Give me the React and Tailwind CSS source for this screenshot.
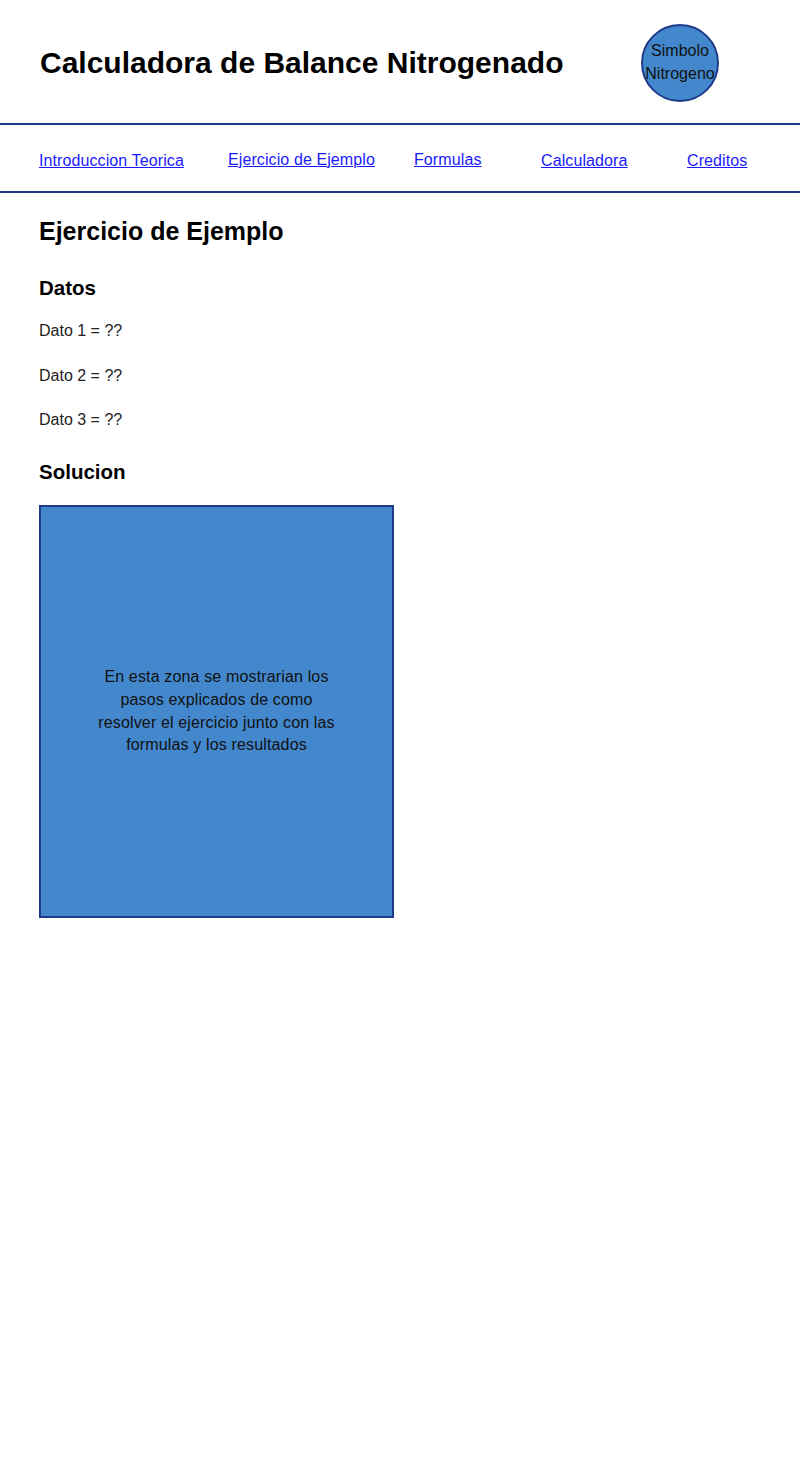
import React from 'react';

const links = [
  { label: 'Introduccion Teorica', cls: 'w-[189px]' },
  { label: 'Ejercicio de Ejemplo', cls: 'w-[186px] -translate-y-px' },
  { label: 'Formulas', cls: 'w-[127px] -translate-y-px' },
  { label: 'Calculadora', cls: 'w-[146px]' },
  { label: 'Creditos', cls: '' },
];

export default function App() {
  return (
    <div className="min-h-[1468px] bg-white text-black font-['Liberation_Sans',Arial,sans-serif]">
      {/* header */}
      <header className="h-[123px] flex items-center pl-[40px]">
        <h1 className="text-[30px] font-bold leading-none w-[601px] mt-[3px]">Calculadora de Balance Nitrogenado</h1>
        <div className="w-[78px] h-[78px] rounded-full bg-[#4387cc] border-2 border-[#1f3a89] flex flex-col items-center justify-center text-[16px] leading-[23px] text-[#111] mt-[2px] pb-[2px]">
          <span>Simbolo</span>
          <span>Nitrogeno</span>
        </div>
      </header>

      {/* nav */}
      <nav className="h-[70px] border-y-2 border-[#1f3a89] flex items-center pl-[39px] pt-[5px]">
        {links.map((l) => (
          <div key={l.label} className={`shrink-0 ${l.cls}`}>
            <a href="#" className="text-[16px] text-[#1a1aff] underline tracking-[0.1px]">
              {l.label}
            </a>
          </div>
        ))}
      </nav>

      {/* content */}
      <main className="pl-[39px] pt-[24px]">
        <h2 className="text-[25px] font-bold leading-[28px]">Ejercicio de Ejemplo</h2>

        <h3 className="text-[20.5px] font-bold leading-[22px] mt-[32px]">Datos</h3>
        <div className="text-[16px] text-[#222] mt-[23px] flex flex-col gap-[26.5px] leading-[18px]">
          <p>Dato 1 = ??</p>
          <p>Dato 2 = ??</p>
          <p>Dato 3 = ??</p>
        </div>

        <h3 className="text-[20.5px] font-bold leading-[22px] mt-[32px]">Solucion</h3>

        <div className="mt-[22px] w-[355px] h-[413px] bg-[#4387cc] border-2 border-[#1f3a89] flex items-center justify-center">
          <p className="w-[244px] text-center text-[16px] leading-[22.7px] text-[#111] tracking-[0.15px]">
            En esta zona se mostrarian los pasos explicados de como resolver el ejercicio junto con las formulas y los resultados
          </p>
        </div>
      </main>
    </div>
  );
}
